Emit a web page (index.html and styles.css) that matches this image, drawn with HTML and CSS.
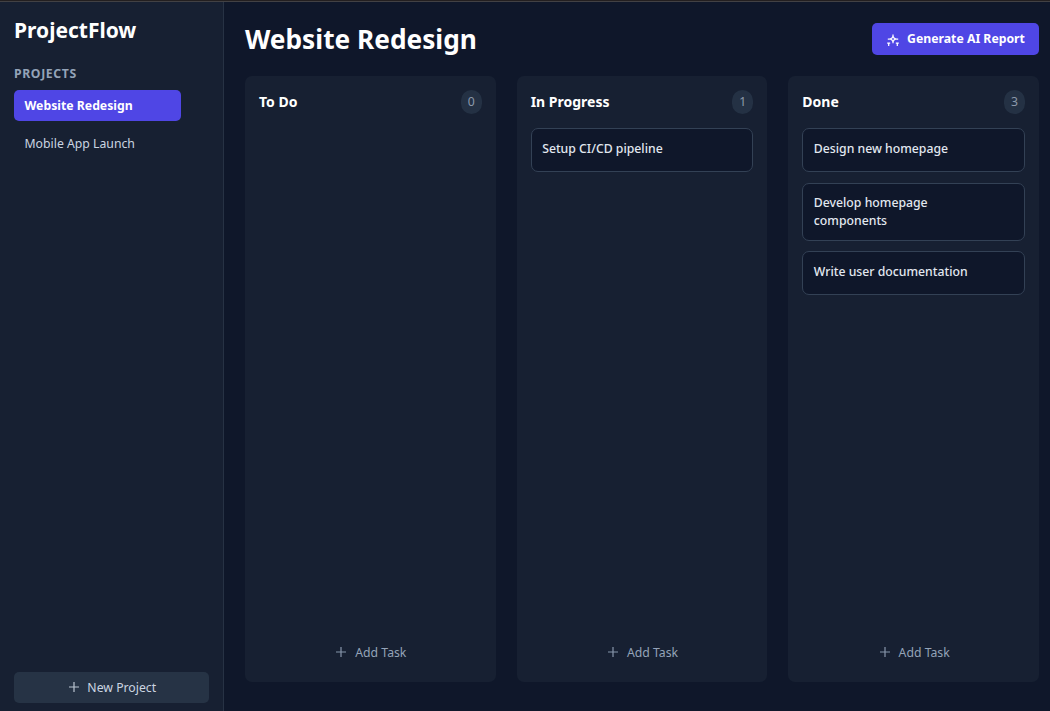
FILE: index.html
```html
<!DOCTYPE html>
<html lang="en">
<head>
<meta charset="utf-8">
<title>ProjectFlow</title>
<link rel="stylesheet" href="styles.css">
</head>
<body>
<div class="app">
  <aside class="sidebar">
    <h1 class="brand">ProjectFlow</h1>
    <h2 class="section">PROJECTS</h2>
    <nav class="projects">
      <a class="project active">Website Redesign</a>
      <a class="project">Mobile App Launch</a>
    </nav>
    <button class="new-project"><svg class="plus" viewBox="0 0 10 10"><path d="M5 0v10M0 5h10"/></svg><span>New Project</span></button>
  </aside>
  <main class="main">
    <header class="header">
      <h2 class="title">Website Redesign</h2>
      <button class="report"><svg class="sparkles" viewBox="0 0 14 14"><path d="M7 1.4v1.8M1.8 6h2M10.2 6h2M7 8.8v1.5M7 3.2l1 1.8 1.8 1-1.8 1-1 1.8-1-1.8-1.8-1 1.8-1zM1.2 10h3M2.7 10v3M9.8 10h3M11.3 10v3"/></svg><span>Generate AI Report</span></button>
    </header>
    <div class="board">
      <section class="column">
        <div class="column-head"><h3>To Do</h3><span class="count">0</span></div>
        <div class="tasks"></div>
        <button class="add"><svg class="plus" viewBox="0 0 10 10"><path d="M5 0v10M0 5h10"/></svg><span>Add Task</span></button>
      </section>
      <section class="column">
        <div class="column-head"><h3>In Progress</h3><span class="count">1</span></div>
        <div class="tasks">
          <div class="task">Setup CI/CD pipeline</div>
        </div>
        <button class="add"><svg class="plus" viewBox="0 0 10 10"><path d="M5 0v10M0 5h10"/></svg><span>Add Task</span></button>
      </section>
      <section class="column">
        <div class="column-head"><h3>Done</h3><span class="count">3</span></div>
        <div class="tasks">
          <div class="task">Design new homepage</div>
          <div class="task wrapped">Develop homepage components</div>
          <div class="task">Write user documentation</div>
        </div>
        <button class="add"><svg class="plus" viewBox="0 0 10 10"><path d="M5 0v10M0 5h10"/></svg><span>Add Task</span></button>
      </section>
    </div>
  </main>
</div>
</body>
</html>
```
FILE: styles.css
```css
* { box-sizing: border-box; }
html { font-size: 14px; }
body {
  margin: 0;
  height: 711px;
  overflow: hidden;
  background: #0f172a;
  color: #e2e8f0;
  font-family: "Noto Sans", sans-serif;
  -webkit-font-smoothing: antialiased;
}
h1, h2, h3 { margin: 0; color: #fff; font-weight: 700; }
button {
  display: flex;
  align-items: center;
  justify-content: center;
  margin: 0;
  padding: 0;
  border: 0;
  font: inherit;
}
svg { flex: none; fill: none; stroke: currentColor; }
.app {
  display: flex;
  height: 711px;
  border-top: 1px solid #231f20;
  box-shadow: inset 0 1px #424144;
  padding-top: 1px;
}
.sidebar {
  display: flex;
  flex-direction: column;
  flex: none;
  width: 224px;
  padding: 14px 14px 8px;
  background: #172032;
  border-right: 1px solid #273244;
}
.brand { font-size: 21px; line-height: 28px; }
.section {
  margin-top: 21px;
  font-size: 12.25px;
  line-height: 18px;
  letter-spacing: 0.6px;
  color: #94a3b8;
}
.projects {
  display: flex;
  flex-direction: column;
  gap: 7px;
  width: 167px;
  margin-top: 7px;
  font-size: 12.25px;
}
.project {
  height: 31px;
  padding: 0 10.5px;
  border-radius: 5px;
  line-height: 31px;
  color: #cbd5e1;
}
.project.active { background: #4f46e5; color: #fff; font-weight: 700; }
.new-project {
  gap: 8px;
  height: 31px;
  margin-top: auto;
  padding-left: 2.5px;
  border-radius: 5px;
  background: #263345;
  color: #cbd5e1;
  font-size: 12.25px;
}
.plus { width: 10px; height: 10px; margin-bottom: 1px; stroke-width: 1.2; opacity: 0.9; }
.main {
  display: flex;
  flex-direction: column;
  flex: 1;
  min-width: 0;
  padding: 21px 11px 29px 21px;
}
.header {
  display: flex;
  align-items: center;
  justify-content: space-between;
  height: 32px;
  margin-bottom: 21px;
}
.title { font-size: 26.25px; line-height: 32px; }
.report {
  gap: 7px;
  width: 167px;
  height: 32px;
  padding-bottom: 2px;
  border-radius: 5px;
  background: #4f46e5;
  color: #fff;
  font-size: 12.25px;
  font-weight: 700;
}
.sparkles { width: 14px; height: 14px; margin-top: 3px; stroke-width: 1.25; }
.board {
  display: grid;
  grid-template-columns: repeat(3, minmax(0, 1fr));
  gap: 21px;
  flex: 1;
}
.column {
  display: flex;
  flex-direction: column;
  padding: 14px;
  border-radius: 7px;
  background: #172032;
}
.column-head {
  display: flex;
  align-items: center;
  justify-content: space-between;
  height: 24px;
  margin-bottom: 14px;
}
.column-head h3 { margin-bottom: 2px; font-size: 14px; line-height: 21px; }
.count {
  width: 21px;
  height: 24px;
  border-radius: 11px;
  background: #243144;
  color: #8c99ab;
  font-size: 12.25px;
  line-height: 24px;
  text-align: center;
}
.tasks { display: flex; flex-direction: column; gap: 10.5px; flex: 1; }
.task {
  height: 44px;
  padding: 11px 60px 0 10.5px;
  border: 1px solid #334155;
  border-radius: 7px;
  background: #0f172a;
  font-size: 12.25px;
  font-weight: 500;
  line-height: 17.5px;
  white-space: nowrap;
}
.task.wrapped { height: 58px; padding-top: 10px; line-height: 18px; white-space: normal; }
.add {
  gap: 9px;
  height: 31px;
  padding-left: 2px;
  color: #94a3b8;
  background: none;
  font-size: 12.25px;
}
```
